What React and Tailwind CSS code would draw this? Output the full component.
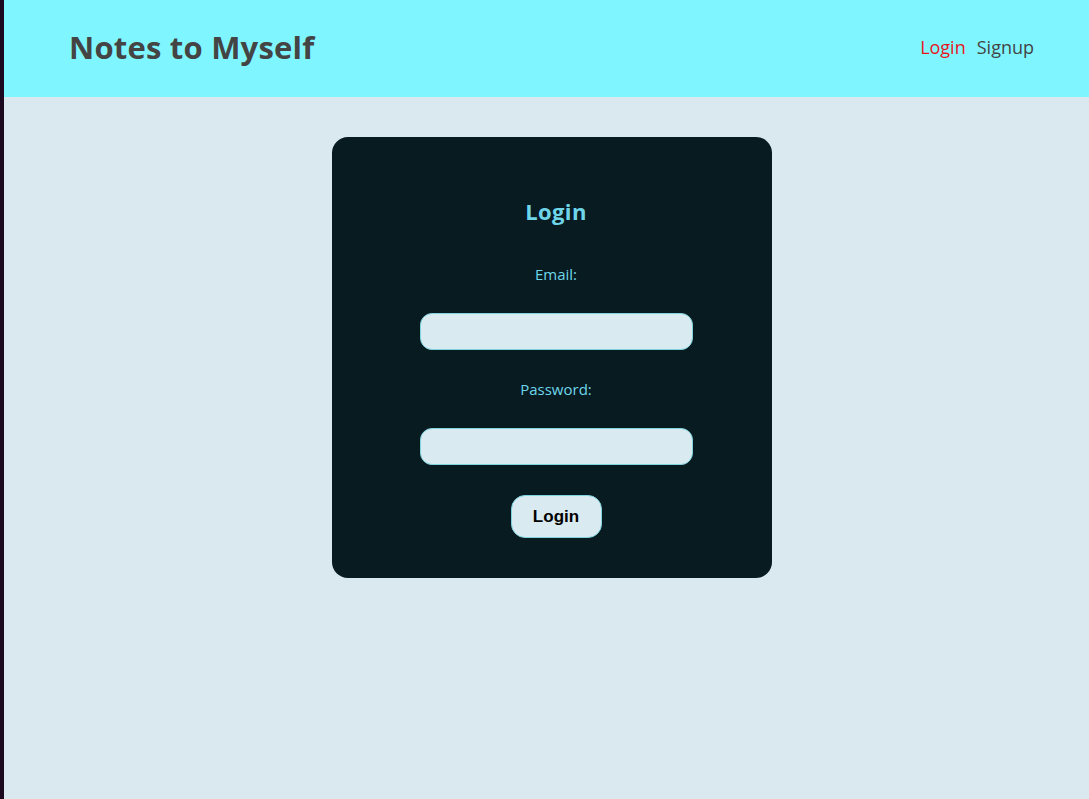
import { useState } from 'react'

const fieldClass =
  'w-[273px] h-[37px] rounded-[12px] border border-[#7fd3df] bg-[#d9eaf0] px-3 outline-none'

export default function App() {
  const [email, setEmail] = useState('')
  const [password, setPassword] = useState('')

  return (
    <div className="flex min-h-[799px] bg-[#dae9f0] font-['Open_Sans',sans-serif]">
      {/* desktop edge left in the screenshot */}
      <div className="w-[4px] shrink-0 bg-[#1b0a1f]" />

      <div className="flex-1 flex flex-col">
        <header className="h-[97px] bg-[#7ff6ff] flex items-center justify-between pl-[65px] pr-[55px] pb-[3px]">
          <h1 className="text-[31px] font-bold text-[#444444] tracking-[0.2px]">Notes to Myself</h1>
          <nav className="flex items-center gap-[11px] text-[18px]">
            <a className="text-[#e8141c] cursor-pointer">Login</a>
            <a className="text-[#444444] cursor-pointer">Signup</a>
          </nav>
        </header>

        <main className="pt-[40px]">
          <div className="ml-[328px] w-[440px] h-[441px] rounded-[16px] bg-[#081b21] pl-[8px] pt-[59px] flex flex-col items-center">
            <h2 className="h-[30px] leading-[30px] text-[22px] font-bold text-[#6fd6ea] tracking-[0.4px]">Login</h2>

            <label className="mt-[36px] h-[24px] leading-[24px] text-[15px] text-[#6fd6ea]">Email:</label>
            <input
              type="email"
              value={email}
              onChange={e => setEmail(e.target.value)}
              className={fieldClass + ' mt-[27px]'}
            />

            <label className="mt-[27px] h-[24px] leading-[24px] text-[15px] text-[#6fd6ea]">Password:</label>
            <input
              type="password"
              value={password}
              onChange={e => setPassword(e.target.value)}
              className={fieldClass + ' mt-[27px]'}
            />

            <button className="mt-[30px] w-[91px] h-[43px] rounded-[14px] border border-[#7fd3df] bg-[#d9eaf0] text-[17px] font-bold text-black font-['Liberation_Sans',Arial,sans-serif]">
              Login
            </button>
          </div>
        </main>
      </div>
    </div>
  )
}
